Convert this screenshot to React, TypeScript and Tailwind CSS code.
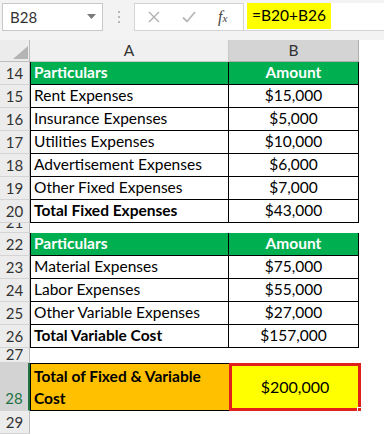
import React from "react";

const F = { fontFamily: '"Lato", "Liberation Sans", sans-serif' };

type Row = {
  n: string;
  h: number;
  kind: "head" | "data" | "blank" | "total" | "final";
  a?: string;
  b?: string;
  boldA?: boolean;
};

const rows: Row[] = [
  { n: "14", h: 23, kind: "head", a: "Particulars", b: "Amount" },
  { n: "15", h: 23, kind: "data", a: "Rent Expenses", b: "$15,000" },
  { n: "16", h: 23, kind: "data", a: "Insurance Expenses", b: "$5,000" },
  { n: "17", h: 23, kind: "data", a: "Utilities Expenses", b: "$10,000" },
  { n: "18", h: 23, kind: "data", a: "Advertisement Expenses", b: "$6,000" },
  { n: "19", h: 23, kind: "data", a: "Other Fixed Expenses", b: "$7,000" },
  { n: "20", h: 23, kind: "data", a: "Total Fixed Expenses", b: "$43,000", boldA: true },
  { n: "21", h: 10, kind: "blank" },
  { n: "22", h: 23, kind: "head", a: "Particulars", b: "Amount" },
  { n: "23", h: 23, kind: "data", a: "Material Expenses", b: "$75,000" },
  { n: "24", h: 23, kind: "data", a: "Labor Expenses", b: "$55,000" },
  { n: "25", h: 23, kind: "data", a: "Other Variable Expenses", b: "$27,000" },
  { n: "26", h: 23, kind: "data", a: "Total Variable Cost", b: "$157,000", boldA: true },
  { n: "27", h: 15, kind: "blank" },
  { n: "28", h: 48, kind: "final" },
  { n: "29", h: 23, kind: "blank" },
];

function RowHeader({ r }: { r: Row }) {
  const sel = r.kind === "final";
  return (
    <div
      className={`w-[30px] shrink-0 flex justify-center overflow-hidden border-b border-[#d4d4d4] text-[15px] leading-[18px] ${
        sel
          ? "bg-[#d3d3d3] text-[#217346] items-end pb-[3px] border-r-2 border-r-[#217346]"
          : "bg-[#ececec] text-[#333] border-r border-r-[#bdbdbd] " + (r.h < 20 ? "items-start" : "items-center")
      }`}
      style={{ height: r.h }}
    >
      <span className={r.n === "21" ? "-mt-[10px]" : r.n === "27" ? "-mt-[3px]" : ""}>{r.n}</span>
    </div>
  );
}

function DataRow({ r }: { r: Row }) {
  if (r.kind === "blank") {
    return (
      <div className="flex" style={{ height: r.h }}>
        <RowHeader r={r} />
        <div className="flex-1 bg-white" />
      </div>
    );
  }
  if (r.kind === "head") {
    return (
      <div className="flex" style={{ height: r.h }}>
        <RowHeader r={r} />
        <div className="w-[199px] shrink-0 bg-[#00b050] border-l border-r border-b border-black flex items-center pl-[3px] text-white font-bold text-[15.5px]">
          {r.a}
        </div>
        <div className="w-[130px] shrink-0 bg-[#00b050] border-r border-b border-black flex items-center justify-center text-white font-bold text-[15.5px]">
          {r.b}
        </div>
        <div className="flex-1 bg-white" />
      </div>
    );
  }
  if (r.kind === "final") {
    return (
      <div className="flex" style={{ height: r.h }}>
        <RowHeader r={r} />
        <div className="w-[199px] shrink-0 bg-[#ffc000] border-l border-t border-b border-black flex flex-col justify-between pl-[3px] pt-[2px] pb-[2px] text-black font-bold text-[15.5px] leading-[20px]">
          <span>Total of Fixed &amp; Variable</span>
          <span>Cost</span>
        </div>
        <div className="relative w-[132px] shrink-0 bg-[#ffff00] border-[3px] border-[#e1201c] flex items-center justify-center text-black text-[16px]">
          $200,000
          <div className="absolute -right-[4px] -bottom-[4px] w-[5px] h-[5px] bg-[#e1201c] border border-white" />
        </div>
        <div className="flex-1 bg-white" />
      </div>
    );
  }
  return (
    <div className="flex" style={{ height: r.h }}>
      <RowHeader r={r} />
      <div
        className={`w-[199px] shrink-0 bg-white border-l border-r border-b border-black flex items-center pl-[3px] text-black text-[15.5px] ${
          r.boldA ? "font-bold" : ""
        }`}
      >
        {r.a}
      </div>
      <div className="w-[130px] shrink-0 bg-white border-r border-b border-black flex items-center justify-center text-black text-[15.5px]">
        {r.b}
      </div>
      <div className="flex-1 bg-white" />
    </div>
  );
}

export default function App() {
  return (
    <div className="w-[384px] h-[434px] overflow-hidden bg-white" style={F}>
      {/* Formula bar */}
      <div className="h-[40px] bg-[#f3f3f3] flex items-start pt-[3px] pl-[2px]">
        <div className="w-[101px] h-[28px] bg-white border border-[#c8c8c8] flex items-center justify-between pl-[7px] pr-[6px] text-[15px] text-[#333]">
          <span>B28</span>
          <svg width="9" height="6" viewBox="0 0 9 6">
            <path d="M0 0 L9 0 L4.5 5 Z" fill="#7a7a7a" />
          </svg>
        </div>
        <div className="w-[31px] h-[28px] flex flex-col items-center justify-center gap-[3px]">
          <div className="w-[2px] h-[2px] bg-[#b8b8b8]" />
          <div className="w-[2px] h-[2px] bg-[#b8b8b8]" />
          <div className="w-[2px] h-[2px] bg-[#b8b8b8]" />
        </div>
        <div className="w-[110px] h-[28px] bg-white border border-[#d4d4d4] flex items-center">
          <svg width="12" height="12" viewBox="0 0 12 12" className="ml-[13px]">
            <path d="M1 1 L11 11 M11 1 L1 11" stroke="#b0b0b0" strokeWidth="1.4" />
          </svg>
          <svg width="14" height="12" viewBox="0 0 14 12" className="ml-[22px]">
            <path d="M1 6.5 L5 10.5 L13 1" stroke="#b8b8b8" strokeWidth="1.8" fill="none" />
          </svg>
          <span
            className="ml-[22px] italic text-[16px] text-[#444]"
            style={{ fontFamily: '"Liberation Serif", serif' }}
          >
            f<span className="text-[11px]">x</span>
          </span>
        </div>
        <div className="flex-1 h-[28px] bg-white border-b border-[#d4d4d4] flex items-stretch pl-[3px]">
          <div className="w-[84px] h-[26px] bg-[#ffff00] flex items-center justify-center text-[15.5px] text-black">
            =B20+B26
          </div>
        </div>
      </div>
      {/* Column headers */}
      <div className="flex h-[22px]">
        <div className="w-[30px] shrink-0 bg-[#ececec] border-r border-b border-[#bdbdbd] relative">
          <svg width="15" height="13" viewBox="0 0 15 13" className="absolute left-[13px] top-[6px]">
            <path d="M15 0 L15 13 L0 13 Z" fill="#b4b4b4" />
          </svg>
        </div>
        <div className="w-[199px] shrink-0 bg-[#f0f0f0] border-r border-b border-[#c8c8c8] flex items-center justify-center text-[15.5px] text-[#333]">
          A
        </div>
        <div className="w-[130px] shrink-0 bg-[#d4d4d4] border-r border-b border-[#b0b0b0] flex items-center justify-center text-[15.5px] text-[#333]">
          B
        </div>
        <div className="flex-1 bg-white" />
      </div>
      {rows.map((r) => (
        <DataRow key={r.n} r={r} />
      ))}
    </div>
  );
}
